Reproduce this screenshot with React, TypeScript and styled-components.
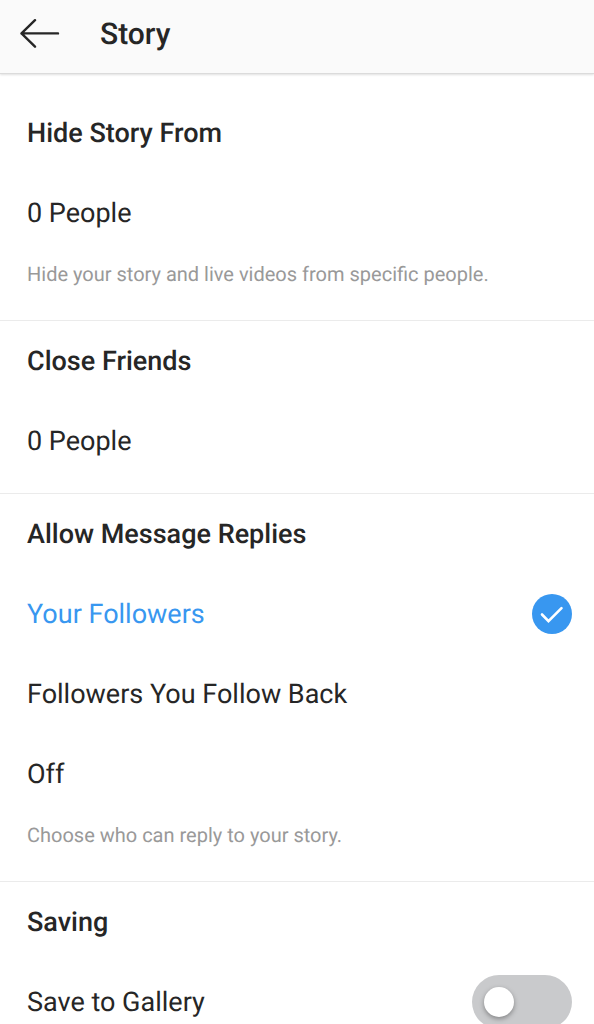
import React, { useState } from "react";
import styled, { createGlobalStyle } from "styled-components";

const GlobalStyle = createGlobalStyle`
  *, *::before, *::after { box-sizing: border-box; }
  html { scrollbar-width: none; }
  body {
    margin: 0;
    background: #ffffff;
    color: #262626;
    font-family: Roboto, "Liberation Sans", sans-serif;
    font-size: 27px;
    line-height: 32px;
    text-rendering: geometricPrecision;
  }
`;

const TopBar = styled.header`
  position: sticky;
  top: 0;
  z-index: 1;
  display: flex;
  align-items: center;
  gap: 40px;
  height: 74px;
  padding: 0 20px 4px;
  background: #fafafa;
  border-bottom: 1px solid #dbdbdb;
  box-shadow: 0 1px 2px rgba(0, 0, 0, 0.12);
`;

const BackButton = styled.button`
  display: flex;
  padding: 0;
  border: 0;
  background: none;
  color: inherit;
  cursor: pointer;
`;

const Title = styled.h1`
  margin: 0;
  font-size: 30px;
  font-weight: 500;
`;

const Content = styled.main`
  padding-top: 19px;
`;

const Section = styled.section`
  padding-bottom: 12px;

  & + & {
    border-top: 1px solid #ebebeb;
  }
`;

const Heading = styled.h2`
  display: flex;
  align-items: center;
  height: 80px;
  margin: 0;
  padding: 0 27px;
  font-size: 27px;
  font-weight: 500;
`;

const RowButton = styled.button`
  display: flex;
  align-items: center;
  width: 100%;
  height: 80px;
  padding: 0 27px;
  border: 0;
  background: none;
  color: inherit;
  font: inherit;
  text-align: left;
  text-rendering: inherit;
  cursor: pointer;
`;

const Option = styled.label<{ $selected?: boolean }>`
  display: flex;
  align-items: center;
  justify-content: space-between;
  height: 80px;
  padding: 0 22px 0 27px;
  color: ${({ $selected }) => ($selected ? "#3897f0" : "inherit")};
  cursor: pointer;
`;

const Radio = styled.input`
  appearance: none;
  width: 40px;
  height: 40px;
  margin: 0;
  border-radius: 50%;

  &:checked {
    background: #3897f0
      url("data:image/svg+xml,%3Csvg xmlns='http://www.w3.org/2000/svg' viewBox='0 0 40 40' fill='none' stroke='white' stroke-width='2.6' stroke-linecap='round'%3E%3Cpath d='M10 20.5L16.5 27.2L29.5 14.2'/%3E%3C/svg%3E");
  }
`;

const Switch = styled.input`
  appearance: none;
  display: flex;
  align-items: center;
  width: 100px;
  height: 54px;
  margin: 0;
  padding: 0 12px;
  border-radius: 27px;
  background: #c9cacc;
  cursor: pointer;

  &::before {
    content: "";
    width: 30px;
    height: 30px;
    border-radius: 50%;
    background: #ffffff;
    box-shadow: 0 2px 5px rgba(0, 0, 0, 0.35);
  }

  &:checked {
    justify-content: flex-end;
    background: #3897f0;
  }
`;

const Note = styled.p`
  margin: 0;
  padding: 0 27px 12px;
  color: #999999;
  font-size: 20px;
  line-height: 43px;
`;

const replyOptions = ["Your Followers", "Followers You Follow Back", "Off"];

export default function App() {
  const [reply, setReply] = useState(replyOptions[0]);
  const [saving, setSaving] = useState(false);

  return (
    <>
      <GlobalStyle />
      <TopBar>
        <BackButton type="button" aria-label="Back">
          <svg
            width="40"
            height="32"
            viewBox="0 0 40 32"
            fill="none"
            stroke="currentColor"
            strokeWidth="2.4"
            strokeLinecap="round"
            strokeLinejoin="round"
          >
            <path d="M15 1.2L1.5 14.4L15 27.7M1.5 14.4H38" />
          </svg>
        </BackButton>
        <Title>Story</Title>
      </TopBar>
      <Content>
        <Section>
          <Heading>Hide Story From</Heading>
          <RowButton type="button">0 People</RowButton>
          <Note>Hide your story and live videos from specific people.</Note>
        </Section>
        <Section>
          <Heading>Close Friends</Heading>
          <RowButton type="button">0 People</RowButton>
        </Section>
        <Section role="radiogroup" aria-labelledby="replies-heading">
          <Heading id="replies-heading">Allow Message Replies</Heading>
          {replyOptions.map((option) => (
            <Option key={option} $selected={option === reply}>
              {option}
              <Radio
                type="radio"
                name="replies"
                checked={option === reply}
                onChange={() => setReply(option)}
              />
            </Option>
          ))}
          <Note>Choose who can reply to your story.</Note>
        </Section>
        <Section>
          <Heading>Saving</Heading>
          <Option>
            Save to Gallery
            <Switch
              type="checkbox"
              role="switch"
              checked={saving}
              onChange={(event) => setSaving(event.target.checked)}
            />
          </Option>
        </Section>
      </Content>
    </>
  );
}
